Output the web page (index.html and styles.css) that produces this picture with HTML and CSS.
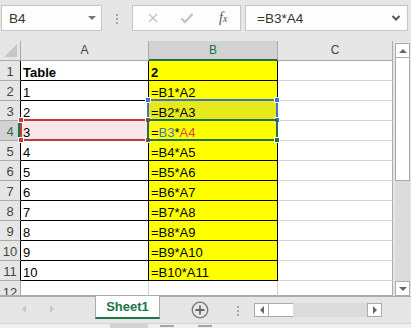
FILE: index.html
```html
<!DOCTYPE html>
<html lang="en">
<head>
  <meta charset="UTF-8">
  <title>Book1 - Excel</title>
  <link rel="stylesheet" href="styles.css">
</head>
<body>
  <!-- Name box and formula bar -->
  <div class="formula-bar">
    <div class="name-box">
      <span>B4</span>
      <span class="tri-down"></span>
    </div>
    <div class="grip"></div>
    <div class="fx-box">
      <svg class="fx-icon" width="12" height="12" viewBox="0 0 12 12"><path d="M2 2 L10 10 M10 2 L2 10" stroke="#c3c3c3" stroke-width="1.4" fill="none"/></svg>
      <svg class="fx-icon" width="14" height="12" viewBox="0 0 14 12"><path d="M1.5 6.5 L5 10 L12.5 2" stroke="#c3c3c3" stroke-width="2.4" fill="none"/></svg>
      <span class="fx-label">f<small>x</small></span>
    </div>
    <div class="formula-input">
      <span>=B3*A4</span>
      <svg width="10" height="8" viewBox="0 0 10 8"><path d="M1.5 2 L5 5.5 L8.5 2" stroke="#555" stroke-width="2" fill="none"/></svg>
    </div>
  </div>

  <div class="workarea">
    <div class="sheet">
      <div class="grid">
        <div class="corner"><span></span></div>
        <div class="ch">A</div>
        <div class="ch sel">B</div>
        <div class="ch">C</div>

        <div class="rh tb">1</div>
        <div class="cell tb bold">Table</div>
        <div class="cell tb yl bold">2</div>
        <div class="cell"></div>

        <div class="rh tb">2</div>
        <div class="cell tb">1</div>
        <div class="cell tb yl">=B1*A2</div>
        <div class="cell"></div>

        <div class="rh tb">3</div>
        <div class="cell tb">2</div>
        <div class="cell tb yl ref">=B2*A3</div>
        <div class="cell"></div>

        <div class="rh tb sel">4</div>
        <div class="cell tb ref-a">3</div>
        <div class="cell tb yl">=<span class="c-blue">B3</span>*<span class="c-red">A4</span></div>
        <div class="cell"></div>

        <div class="rh tb">5</div>
        <div class="cell tb">4</div>
        <div class="cell tb yl">=B4*A5</div>
        <div class="cell"></div>

        <div class="rh tb">6</div>
        <div class="cell tb">5</div>
        <div class="cell tb yl">=B5*A6</div>
        <div class="cell"></div>

        <div class="rh tb">7</div>
        <div class="cell tb">6</div>
        <div class="cell tb yl">=B6*A7</div>
        <div class="cell"></div>

        <div class="rh tb">8</div>
        <div class="cell tb">7</div>
        <div class="cell tb yl">=B7*A8</div>
        <div class="cell"></div>

        <div class="rh tb">9</div>
        <div class="cell tb">8</div>
        <div class="cell tb yl">=B8*A9</div>
        <div class="cell"></div>

        <div class="rh tb">10</div>
        <div class="cell tb">9</div>
        <div class="cell tb yl">=B9*A10</div>
        <div class="cell"></div>

        <div class="rh tb">11</div>
        <div class="cell tb">10</div>
        <div class="cell tb yl">=B10*A11</div>
        <div class="cell"></div>

        <div class="rh last">12</div>
        <div class="cell last"></div>
        <div class="cell last"></div>
        <div class="cell last"></div>
      </div>

      <!-- Formula reference highlights and active cell -->
      <div class="range blue">
        <i class="h tl"></i><i class="h tr"></i><i class="h br"></i>
      </div>
      <div class="range red">
        <i class="h tl"></i><i class="h tr"></i><i class="h bl"></i><i class="h br"></i>
      </div>
      <div class="range active">
        <i class="h br"></i>
      </div>
    </div>

    <!-- Vertical scrollbar -->
    <div class="vscroll">
      <div class="sb-btn"><span class="tri-up"></span></div>
      <div class="v-thumb"></div>
      <div class="v-track"></div>
      <div class="sb-btn"><span class="tri-down dark"></span></div>
    </div>
  </div>

  <!-- Sheet tabs -->
  <div class="tabbar">
    <div class="tab-nav">
      <span class="tri-left light"></span>
      <span class="tri-right light"></span>
    </div>
    <div class="tab">Sheet1</div>
    <div class="add-sheet">
      <svg width="18" height="18" viewBox="0 0 18 18"><circle cx="9" cy="9" r="7.8" stroke="#777" stroke-width="1.3" fill="none"/><path d="M9 4.5 V13.5 M4.5 9 H13.5" stroke="#666" stroke-width="1.8"/></svg>
    </div>
    <div class="grip tab-grip"></div>
    <div class="hscroll">
      <div class="hs-btn"><span class="tri-left"></span></div>
      <div class="h-thumb"></div>
      <div class="h-track"></div>
      <div class="hs-btn"><span class="tri-right"></span></div>
    </div>
  </div>

  <div class="status">
    <span class="st-a"></span>
    <span class="st-b"></span>
    <span class="st-c"></span>
  </div>
</body>
</html>
```

FILE: styles.css
```css
/* Excel-like sheet, 411 x 328 */
body {
  margin: 0;
  width: 411px;
  height: 328px;
  overflow: hidden;
  background: #e6e6e6;
  font-family: "Liberation Sans", Arial, sans-serif;
  color: #000;
}

/* Formula bar */
.formula-bar {
  display: flex;
  align-items: flex-start;
  height: 41px;
  padding-top: 5px;
  box-sizing: border-box;
}

.name-box {
  display: flex;
  align-items: center;
  justify-content: space-between;
  margin-left: 1px;
  width: 101px;
  height: 26px;
  box-sizing: border-box;
  padding: 0 5px 0 7px;
  background: #fdfdfd;
  border: 1px solid #c6c6c6;
  font-size: 13.5px;
  color: #333;
}

.grip {
  width: 2px;
  height: 11px;
  margin: 8px 14px 0 14px;
  background: radial-gradient(circle, #a6a6a6 0.9px, transparent 1.1px) 0 0 / 2px 4px;
}

.fx-box {
  display: flex;
  align-items: center;
  width: 109px;
  height: 26px;
  box-sizing: border-box;
  padding: 0 12px 0 14px;
  gap: 21px;
  background: #fdfdfd;
  border: 1px solid #c6c6c6;
}

.fx-label {
  font-family: "Liberation Serif", serif;
  font-style: italic;
  font-size: 14px;
  color: #555;
  margin-left: 4px;
}

.fx-label small {
  font-size: 10px;
}

.formula-input {
  display: flex;
  align-items: center;
  justify-content: space-between;
  margin-left: 4px;
  width: 163px;
  height: 26px;
  box-sizing: border-box;
  padding: 0 6px 0 11px;
  background: #fdfdfd;
  border: 1px solid #c6c6c6;
  font-size: 13.5px;
  color: #333;
}

/* Small triangles */
.tri-down {
  width: 0;
  height: 0;
  border-left: 4px solid transparent;
  border-right: 4px solid transparent;
  border-top: 4px solid #777;
}

.tri-down.dark {
  border-top-color: #666;
}

.tri-up {
  width: 0;
  height: 0;
  border-left: 4px solid transparent;
  border-right: 4px solid transparent;
  border-bottom: 4px solid #666;
}

.tri-left {
  width: 0;
  height: 0;
  border-top: 4px solid transparent;
  border-bottom: 4px solid transparent;
  border-right: 4px solid #666;
}

.tri-right {
  width: 0;
  height: 0;
  border-top: 4px solid transparent;
  border-bottom: 4px solid transparent;
  border-left: 4px solid #666;
}

.tri-left.light {
  border-right-color: #c6c6c6;
}

.tri-right.light {
  border-left-color: #c6c6c6;
}

/* Worksheet */
.workarea {
  display: flex;
  height: 255px;
}

.sheet {
  position: relative;
  width: 393px;
  overflow: hidden;
}

.grid {
  display: grid;
  grid-template-columns: 21px 128px 129px 115px;
  grid-template-rows: 20px repeat(11, 20px) 15px;
  background: #fff;
}

.grid > div {
  box-sizing: border-box;
  border-right: 1px solid #d4d4d4;
  border-bottom: 1px solid #d4d4d4;
  white-space: nowrap;
  overflow: hidden;
}

.corner {
  background: #e6e6e6;
  border-right-color: #ababab !important;
  border-bottom-color: #ababab !important;
  position: relative;
}

.corner span {
  position: absolute;
  right: 3px;
  bottom: 3px;
  width: 0;
  height: 0;
  border-left: 13px solid transparent;
  border-bottom: 13px solid #c6c6c6;
}

.ch {
  background: #e6e6e6;
  border-bottom-color: #ababab !important;
  border-right-color: #ababab !important;
  text-align: center;
  font-size: 12px;
  line-height: 19px;
  color: #444;
}

.grid > div:nth-child(4n) {
  border-right-color: #ababab;
}

.ch.sel {
  background: #d2d2d2;
  color: #217346;
  border-bottom: 2px solid #217346 !important;
}

.rh {
  background: #e6e6e6;
  border-bottom-color: #ababab !important;
  text-align: center;
  font-size: 13px;
  line-height: 21px;
  color: #444;
}

.rh.tb {
  border-right-color: #000;
}

.rh.sel {
  background: #d2d2d2;
  color: #217346;
  border-right: 1px solid #000;
  box-shadow: inset -2px 0 0 #217346;
}

.rh.last {
  border-right-color: #ababab;
  line-height: 24px;
}

.cell {
  padding: 4px 0 0 2px;
  font-size: 13px;
  line-height: 15px;
}

.cell.tb {
  border-right-color: #000;
  border-bottom-color: #000;
}

.grid > .cell:nth-child(4n) {
  border-right-color: #ababab;
}

.cell.last {
  border-bottom-color: #ababab;
}

.bold {
  font-weight: bold;
}

.yl {
  background: #ffff00;
}

.yl.ref {
  background: #e6e91c;
}

.ref-a {
  background: #f7e7e8;
}

.c-blue {
  color: #4472c4;
}

.c-red {
  color: #d9453a;
}

/* Reference ranges drawn over the grid */
.range {
  position: absolute;
  box-sizing: border-box;
  border: 2px solid;
}

.range.blue {
  left: 147px;
  top: 58px;
  width: 131px;
  height: 22px;
  border-color: #4472c4;
}

.range.red {
  left: 20px;
  top: 78px;
  width: 129px;
  height: 22px;
  border-color: #c0393c;
}

.range.active {
  left: 147px;
  top: 78px;
  width: 131px;
  height: 22px;
  border-color: #217346;
}

.h {
  position: absolute;
  width: 6px;
  height: 6px;
  box-sizing: border-box;
  border: 1px solid #fff;
}

.blue .h { background: #4472c4; }
.red .h { background: #c0393c; }
.active .h { background: #217346; }

.h.tl { left: -4px; top: -4px; }
.h.tr { right: -4px; top: -4px; }
.h.bl { left: -4px; bottom: -4px; }
.h.br { right: -4px; bottom: -4px; }

/* Vertical scrollbar */
.vscroll {
  display: flex;
  flex-direction: column;
  width: 18px;
  padding: 2px 1px 0 2px;
  box-sizing: border-box;
}

.sb-btn {
  display: flex;
  align-items: center;
  justify-content: center;
  height: 15px;
  box-sizing: border-box;
  background: #fff;
  border: 1px solid #ababab;
}

.v-thumb {
  height: 122px;
  background: #fff;
  border: 1px solid #ababab;
  border-top: none;
}

.v-track {
  flex: 1;
  background: #dbdbdb;
}

/* Tabs */
.tabbar {
  display: flex;
  align-items: flex-start;
  height: 27px;
  border-top: 1px solid #ababab;
  box-sizing: border-box;
}

.tab-nav {
  display: flex;
  align-items: center;
  gap: 24px;
  width: 95px;
  height: 24px;
  padding-left: 22px;
  box-sizing: border-box;
}

.tab {
  width: 65px;
  height: 23px;
  margin-top: -1px;
  box-sizing: border-box;
  background: #fff;
  border-left: 1px solid #ababab;
  border-right: 1px solid #ababab;
  border-bottom: 2px solid #217346;
  text-align: center;
  font-size: 13px;
  font-weight: bold;
  line-height: 22px;
  color: #217346;
}

.add-sheet {
  margin: 4px 0 0 31px;
  height: 18px;
}

.tab-grip {
  margin: 8px 15px 0 28px;
}

.hscroll {
  display: flex;
  margin-top: 6px;
  width: 128px;
  height: 14px;
}

.hs-btn {
  display: flex;
  align-items: center;
  justify-content: center;
  width: 15px;
  box-sizing: border-box;
  background: #fff;
  border: 1px solid #ababab;
}

.h-thumb {
  width: 24px;
  background: #fff;
  border-top: 1px solid #ababab;
  border-bottom: 1px solid #ababab;
}

.h-track {
  flex: 1;
  background: #dbdbdb;
}

/* Status strip at the very bottom */
.status {
  position: relative;
  height: 5px;
  border-top: 1px solid #d4d4d4;
  background: #f0f0f0;
}

.status span {
  position: absolute;
  top: 0;
  height: 5px;
  background: #d2d2d2;
}

.st-a { left: 110px; width: 38px; }
.st-b { left: 160px; width: 14px; background: #a6a6a6 !important; height: 2px !important; top: 1px !important; }
.st-c { left: 198px; width: 14px; background: #a6a6a6 !important; height: 2px !important; top: 1px !important; }
```
